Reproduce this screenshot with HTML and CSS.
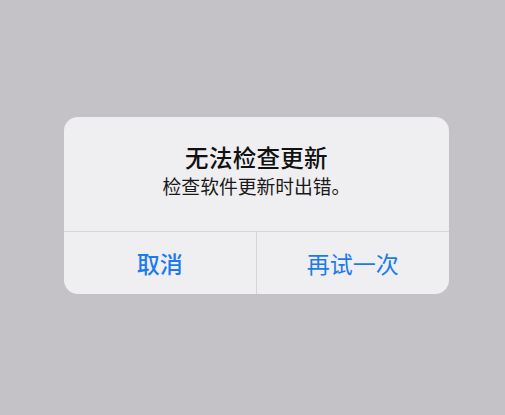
FILE: index.html
```html
<!DOCTYPE html>
<html lang="zh-CN">
<head>
<meta charset="utf-8">
<title>无法检查更新</title>
<link rel="stylesheet" href="styles.css">
</head>
<body>
  <div class="screen">
    <div class="alert">
      <div class="alert-body">
        <div class="alert-title">无法检查更新</div>
        <div class="alert-message">检查软件更新时出错。</div>
      </div>
      <div class="alert-actions">
        <div class="action action-cancel">取消</div>
        <div class="action">再试一次</div>
      </div>
    </div>
  </div>
</body>
</html>
```
FILE: styles.css
```css
html, body {
  margin: 0;
  padding: 0;
}

body {
  width: 505px;
  height: 415px;
  background: #c4c2c6;
  font-family: "Noto Sans CJK SC", "Noto Sans", sans-serif;
  overflow: hidden;
}

.screen {
  padding: 117px 0 0 64px;
}

.alert {
  width: 385px;
  height: 177px;
  background: #efeef1;
  border-radius: 14px;
  display: flex;
  flex-direction: column;
  overflow: hidden;
}

.alert-body {
  height: 115px;
  display: flex;
  flex-direction: column;
  align-items: center;
  padding-top: 25px;
  box-sizing: border-box;
  border-bottom: 1px solid #d6d5d9;
}

.alert-title {
  font-size: 23.5px;
  line-height: 30px;
  font-weight: 500;
  color: #111;
  letter-spacing: 0.3px;
}

.alert-message {
  font-size: 18.8px;
  line-height: 26px;
  color: #1a1a1a;
  margin-top: 1px;
}

.alert-actions {
  flex: 1;
  display: grid;
  grid-template-columns: 1fr 1fr;
}

.action {
  display: flex;
  align-items: center;
  justify-content: center;
  font-size: 23px;
  color: #1b7bee;
  padding-bottom: 1px;
}

.action-cancel {
  font-weight: 500;
  border-right: 1px solid #d6d5d9;
}
```
